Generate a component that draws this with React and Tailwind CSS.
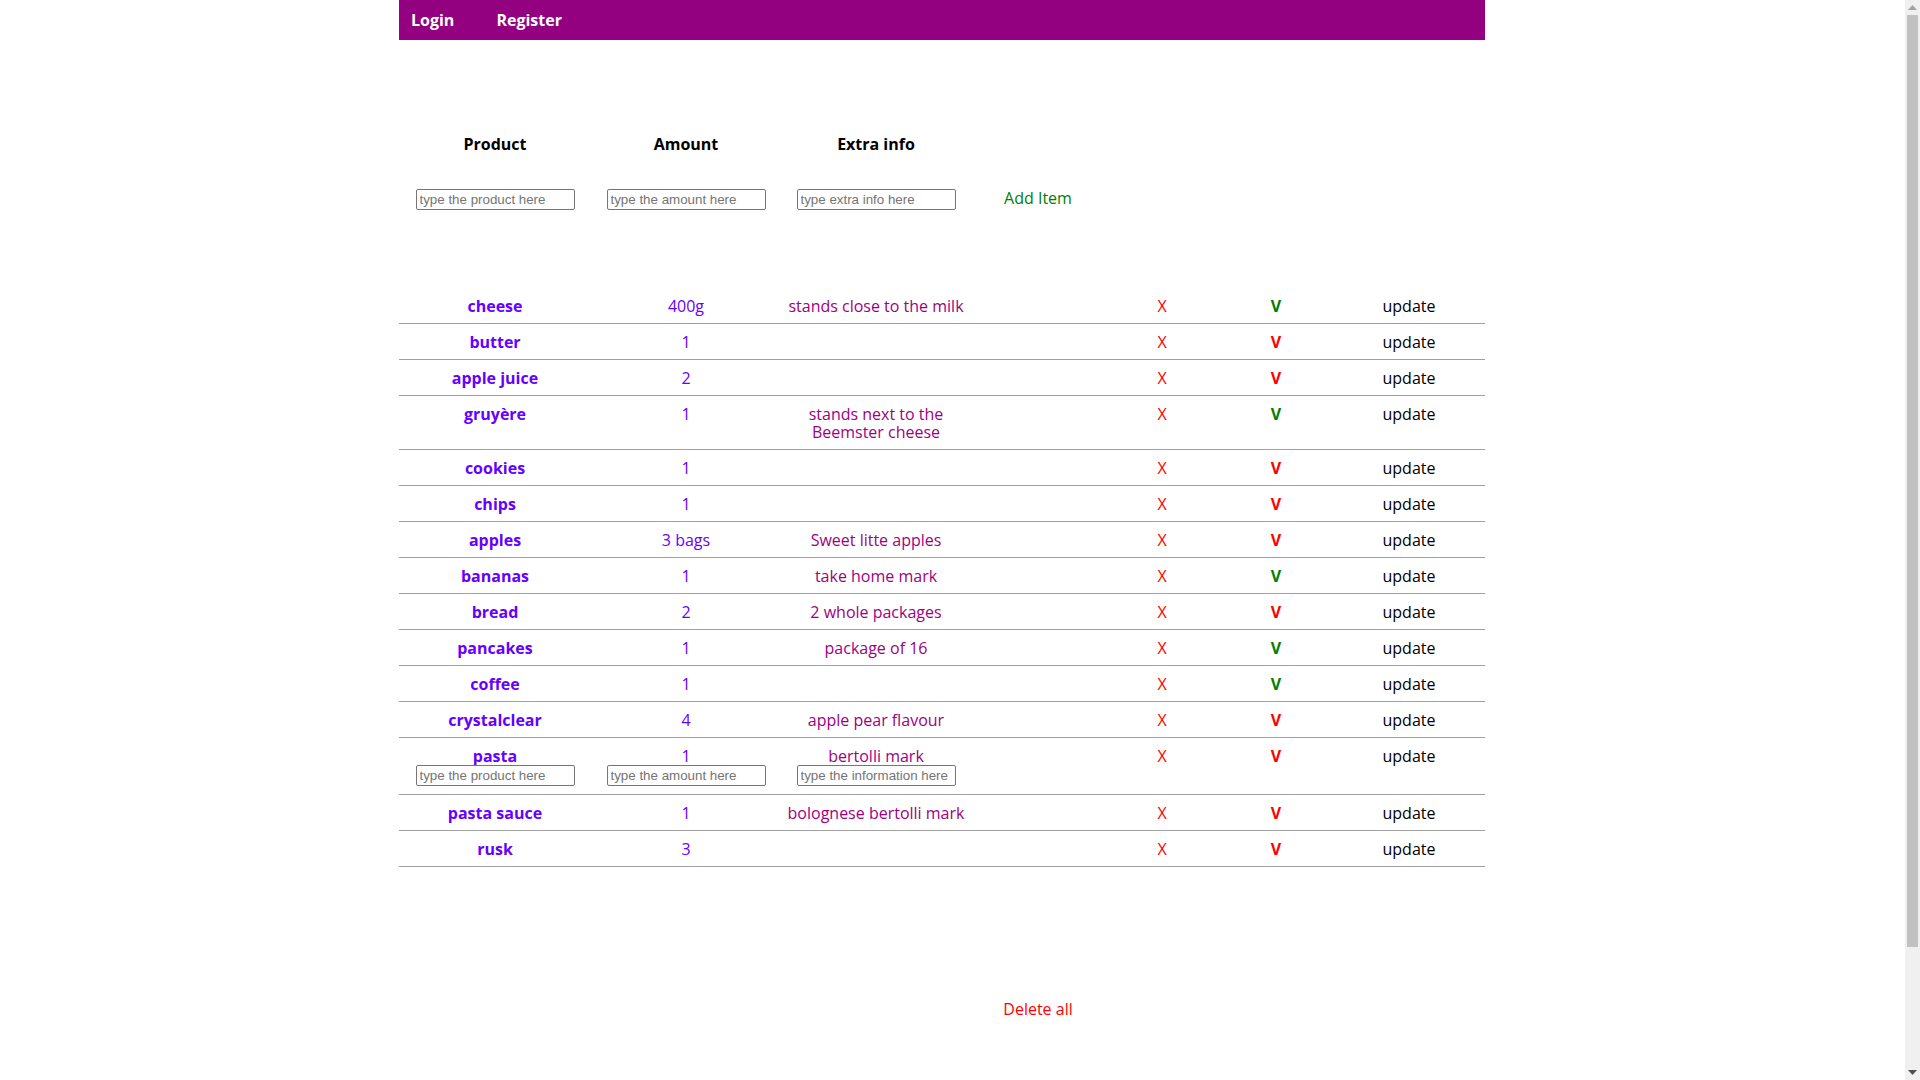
import React from "react";

const items = [
  { name: "cheese", amount: "400g", info: ["stands close to the milk"], done: true },
  { name: "butter", amount: "1", info: [], done: false },
  { name: "apple juice", amount: "2", info: [], done: false },
  { name: "gruyère", amount: "1", info: ["stands next to the", "Beemster cheese"], done: true },
  { name: "cookies", amount: "1", info: [], done: false },
  { name: "chips", amount: "1", info: [], done: false },
  { name: "apples", amount: "3 bags", info: ["Sweet litte apples"], done: false },
  { name: "bananas", amount: "1", info: ["take home mark"], done: true },
  { name: "bread", amount: "2", info: ["2 whole packages"], done: false },
  { name: "pancakes", amount: "1", info: ["package of 16"], done: true },
  { name: "coffee", amount: "1", info: [], done: true },
  { name: "crystalclear", amount: "4", info: ["apple pear flavour"], done: false },
  { name: "pasta", amount: "1", info: ["bertolli mark"], done: false, editing: true },
  { name: "pasta sauce", amount: "1", info: ["bolognese bertolli mark"], done: false },
  { name: "rusk", amount: "3", info: [], done: false },
];

const cols = "grid grid-cols-[192px_190px_190px_134px_114px_114px_152px]";

function Field({ placeholder }) {
  return (
    <input
      type="text"
      placeholder={placeholder}
      className="w-[159px] h-[21px] border border-[#767676] rounded-[2px] px-[3px] text-[13.33px] leading-[17px] text-black placeholder:text-[#757575] bg-white"
      style={{ fontFamily: '"Liberation Sans", Arial, sans-serif' }}
    />
  );
}

function Row({ item }) {
  return (
    <div className={`${cols} border-b border-[#a0a0a0] pt-[9px] pb-[8px] text-center leading-[18px]`}>
      <div className="flex flex-col items-center">
        <span className="font-bold text-[#6600ff]">{item.name}</span>
        {item.editing && <Field placeholder="type the product here" />}
      </div>
      <div className="flex flex-col items-center">
        <span className="text-[#6600ff]">{item.amount}</span>
        {item.editing && <Field placeholder="type the amount here" />}
      </div>
      <div className="flex flex-col items-center">
        {item.info.map((l) => (
          <span key={l} className="text-[#a0007f]">{l}</span>
        ))}
        {item.editing && <Field placeholder="type the information here" />}
      </div>
      <div></div>
      <div className="text-[#ff0000]">X</div>
      <div className={`font-bold ${item.done ? "text-[#008000]" : "text-[#ff0000]"}`}>V</div>
      <div className="text-black">update</div>
    </div>
  );
}

// browser scrollbar as it shows in the screenshot
function Scrollbar() {
  return (
    <div className="fixed top-0 right-0 w-[15px] h-[1080px] bg-[#f0f0f0] flex flex-col items-center">
      <div className="h-[15px] flex items-center justify-center">
        <svg width="9" height="5" viewBox="0 0 9 5"><path d="M0 5 L4.5 0 L9 5 Z" fill="#a3a3a3" /></svg>
      </div>
      <div className="w-[11px] h-[932px] bg-[#c1c1c1]"></div>
      <div className="flex-1"></div>
      <div className="h-[15px] flex items-center justify-center">
        <svg width="9" height="5" viewBox="0 0 9 5"><path d="M0 0 L9 0 L4.5 5 Z" fill="#505050" /></svg>
      </div>
    </div>
  );
}

export default function App() {
  return (
    <div className="bg-white min-h-[1217px] pb-[200px]" style={{ fontFamily: '"Open Sans", sans-serif' }}>
      <div className="ml-[399px] w-[1086px] text-[16px]">
        {/* nav */}
        <div className="h-[40px] bg-[#930080] flex items-center pl-[12px] gap-[42px] text-white font-bold">
          <span>Login</span>
          <span>Register</span>
        </div>

        {/* add form */}
        <div className={`${cols} mt-[95px] text-center leading-[18px] font-bold text-black`}>
          <div>Product</div>
          <div>Amount</div>
          <div>Extra info</div>
        </div>
        <div className={`${cols} mt-[36px] items-center text-center leading-[18px]`}>
          <div className="flex justify-center"><Field placeholder="type the product here" /></div>
          <div className="flex justify-center"><Field placeholder="type the amount here" /></div>
          <div className="flex justify-center"><Field placeholder="type extra info here" /></div>
          <div className="text-[#008000] -mt-[4px]">Add Item</div>
        </div>

        {/* list */}
        <div className="mt-[78px]">
          {items.map((it) => (
            <Row key={it.name} item={it} />
          ))}
        </div>

        <div className={`${cols} mt-[133px] text-center leading-[18px]`}>
          <div></div>
          <div></div>
          <div></div>
          <div className="text-[#ff0000]">Delete all</div>
        </div>
      </div>
      <Scrollbar />
    </div>
  );
}
